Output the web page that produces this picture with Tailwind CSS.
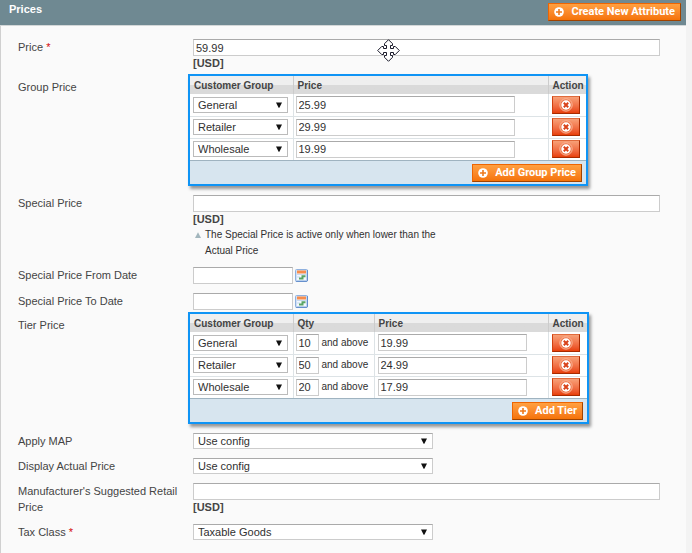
<!DOCTYPE html>
<html lang="en">
<head>
<meta charset="utf-8">
<meta name="viewport" content="width=device-width, initial-scale=1">
<title>Prices</title>
<script src="https://cdn.jsdelivr.net/npm/@tailwindcss/browser@4"></script>
</head>
<body class="min-h-screen bg-[#f3f3f3] pr-1.5 font-['Liberation_Sans',Arial,sans-serif] text-[11px] leading-4 text-[#444]">

<svg class="hidden" aria-hidden="true">
  <symbol id="plus" viewBox="0 0 10 10">
    <circle cx="5" cy="5" r="4.8" fill="#fff"/>
    <path d="M5 2v6M2 5h6" stroke="#ee7a1c" stroke-width="1.6"/>
  </symbol>
  <symbol id="remove" viewBox="0 0 14 14">
    <circle cx="7" cy="7" r="6.2" fill="#ee7448" stroke="#fbc3a8" stroke-width=".8"/>
    <circle cx="7" cy="7" r="4.7" fill="#fff"/>
    <path d="M4.8 4.8l4.4 4.4M9.2 4.8l-4.4 4.4" stroke="#d8421a" stroke-width="2"/>
  </symbol>
  <symbol id="arrow" viewBox="0 0 6 6">
    <path d="M0 .5h6L3.4 5.8h-.8z" fill="#111"/>
  </symbol>
  <symbol id="calendar" viewBox="0 0 13 13">
    <rect x=".5" y=".5" width="12" height="12" rx="1" fill="#cfe0f5" stroke="#8fb0de"/>
    <rect x="2" y="2" width="9" height="9" fill="#f4f8fc"/>
    <rect x="2" y="1.500" width="9" height="3" fill="#f78d4d"/>
    <path d="M2 5.500h9M2 8h3" stroke="#b5cbe8" stroke-width=".7"/>
    <path d="M6.500 6.200h4v2h-2v2.200H4V8.600h2.500z" fill="#5aa565"/>
    <path d="M1 12.300h11M12.400 1v11" stroke="#4f7fc4" stroke-width=".8"/>
  </symbol>
</svg>

<main class="relative min-h-screen border-l border-[#d0d0d0] bg-[#fafafa] pb-3">
  <header class="-ml-px flex h-[26px] items-start justify-between border-b border-[#d3d7d8] bg-[#6f8992] pr-[5px] pl-[9px]">
    <h1 class="pt-px font-bold text-white">Prices</h1>
    <button type="button" class="mt-[3px] flex h-[18px] items-center gap-[7px] border border-t-[#ed6502] border-r-[#a04300] border-b-[#a04300] border-l-[#ed6502] bg-linear-to-b from-[#ffa040] to-[#f57305] px-[5px] font-['Roboto',Arial,sans-serif] font-bold text-white"><svg class="size-2.5"><use href="#plus"/></svg>Create New Attribute</button>
  </header>

  <form class="pr-[26px] pl-[17px]">
    <div class="mt-[13px] flex">
      <label for="price" class="w-[175px] shrink-0">Price <span class="text-[#d40707]">*</span></label>
      <div class="flex-1">
        <input id="price" value="59.99" class="block h-[17px] w-full border border-[#ccc] border-t-[#aaa] bg-white px-0.5 text-[#303030]">
        <strong class="block leading-[15px]">[USD]</strong>
      </div>
    </div>

    <div class="mt-[3px] flex">
      <span id="group-label" class="w-[175px] shrink-0 pt-[5px]">Group Price</span>
      <div class="-ml-[5px] w-[400px] border-2 border-[#0f94f5] bg-[#d7e5ef] shadow-[2px_3px_3px_#0006]">
        <table aria-labelledby="group-label" class="w-full table-fixed border-collapse bg-white">
          <thead class="bg-linear-to-b from-[#efefef] from-50% to-[#dadada] to-50% text-left text-[10px]">
            <tr class="h-[18px]">
              <th class="w-[103px] border-r border-[#ccc] pt-0.5 pl-1">Customer Group</th>
              <th class="border-r border-[#ccc] pt-0.5 pl-1">Price</th>
              <th class="w-[38px] pt-0.5 pl-1">Action</th>
            </tr>
          </thead>
          <tbody class="text-[#303030]">
            <tr class="h-[22px] border-b border-[#dde3e6]">
              <td class="border-r border-[#dde3e6] pl-[3px]"><div class="relative w-[95px]"><select aria-label="Customer group" class="block h-4 w-full appearance-none border border-[#bbb] bg-white pl-1 leading-[14px]"><option>General</option></select><svg class="pointer-events-none absolute top-[5px] right-[6px] size-1.5"><use href="#arrow"/></svg></div></td>
              <td class="border-r border-[#dde3e6] pl-0.5"><input aria-label="Price" value="25.99" class="block h-[17px] w-[219px] border border-[#ccc] border-t-[#aaa] px-0.5"></td>
              <td class="pl-[3px]"><button type="button" aria-label="Delete" class="flex h-[18px] w-7 items-center justify-center border border-t-[#e06a3c] border-r-[#a82a00] border-b-[#a82a00] border-l-[#d2400f] bg-linear-to-b from-[#f7a077] to-[#e83f05]"><svg class="size-3.5"><use href="#remove"/></svg></button></td>
            </tr>
            <tr class="h-[22px] border-b border-[#dde3e6]">
              <td class="border-r border-[#dde3e6] pl-[3px]"><div class="relative w-[95px]"><select aria-label="Customer group" class="block h-4 w-full appearance-none border border-[#bbb] bg-white pl-1 leading-[14px]"><option>Retailer</option></select><svg class="pointer-events-none absolute top-[5px] right-[6px] size-1.5"><use href="#arrow"/></svg></div></td>
              <td class="border-r border-[#dde3e6] pl-0.5"><input aria-label="Price" value="29.99" class="block h-[17px] w-[219px] border border-[#ccc] border-t-[#aaa] px-0.5"></td>
              <td class="pl-[3px]"><button type="button" aria-label="Delete" class="flex h-[18px] w-7 items-center justify-center border border-t-[#e06a3c] border-r-[#a82a00] border-b-[#a82a00] border-l-[#d2400f] bg-linear-to-b from-[#f7a077] to-[#e83f05]"><svg class="size-3.5"><use href="#remove"/></svg></button></td>
            </tr>
            <tr class="h-[22px]">
              <td class="border-r border-[#dde3e6] pl-[3px]"><div class="relative w-[95px]"><select aria-label="Customer group" class="block h-4 w-full appearance-none border border-[#bbb] bg-white pl-1 leading-[14px]"><option>Wholesale</option></select><svg class="pointer-events-none absolute top-[5px] right-[6px] size-1.5"><use href="#arrow"/></svg></div></td>
              <td class="border-r border-[#dde3e6] pl-0.5"><input aria-label="Price" value="19.99" class="block h-[17px] w-[219px] border border-[#ccc] border-t-[#aaa] px-0.5"></td>
              <td class="pl-[3px]"><button type="button" aria-label="Delete" class="flex h-[18px] w-7 items-center justify-center border border-t-[#e06a3c] border-r-[#a82a00] border-b-[#a82a00] border-l-[#d2400f] bg-linear-to-b from-[#f7a077] to-[#e83f05]"><svg class="size-3.5"><use href="#remove"/></svg></button></td>
            </tr>
          </tbody>
        </table>
        <div class="flex h-6 items-center justify-end border-t border-[#9fb3c0] pr-1">
          <button type="button" class="flex h-[18px] items-center gap-[7px] border border-t-[#ed6502] border-r-[#a04300] border-b-[#a04300] border-l-[#ed6502] bg-linear-to-b from-[#ffa040] to-[#f57305] px-[5px] font-['Roboto',Arial,sans-serif] font-bold text-white"><svg class="size-2.5"><use href="#plus"/></svg>Add Group Price</button>
        </div>
      </div>
    </div>

    <div class="mt-[9px] flex">
      <label for="special" class="w-[175px] shrink-0">Special Price</label>
      <div class="flex-1">
        <input id="special" class="block h-[17px] w-full border border-[#ccc] border-t-[#aaa] bg-white px-0.5">
        <strong class="block leading-[15px]">[USD]</strong>
        <p class="flex w-[250px] text-[10px] text-[#303030]"><svg viewBox="0 0 6 6" class="mt-[5px] mr-[4px] ml-0.5 size-1.5 shrink-0"><path d="M3 .3L6 6H0z" fill="#a3b6bd"/></svg>The Special Price is active only when lower than the Actual Price</p>
      </div>
    </div>

    <div class="mt-2 flex">
      <label for="from" class="w-[175px] shrink-0">Special Price From Date</label>
      <input id="from" class="block h-[17px] w-[100px] border border-[#ccc] border-t-[#aaa] bg-white px-0.5">
      <button type="button" aria-label="Select from date" class="mt-0.5 ml-0.5 size-[13px]"><svg class="size-[13px]"><use href="#calendar"/></svg></button>
    </div>

    <div class="mt-[9px] flex">
      <label for="to" class="w-[175px] shrink-0">Special Price To Date</label>
      <input id="to" class="block h-[17px] w-[100px] border border-[#ccc] border-t-[#aaa] bg-white px-0.5">
      <button type="button" aria-label="Select to date" class="mt-0.5 ml-0.5 size-[13px]"><svg class="size-[13px]"><use href="#calendar"/></svg></button>
    </div>

    <div class="mt-0.5 flex">
      <span id="tier-label" class="w-[175px] shrink-0 pt-[5px]">Tier Price</span>
      <div class="-ml-[5px] w-[401px] border-2 border-[#0f94f5] bg-[#d7e5ef] shadow-[2px_3px_3px_#0006]">
        <table aria-labelledby="tier-label" class="w-full table-fixed border-collapse bg-white">
          <thead class="bg-linear-to-b from-[#efefef] from-50% to-[#dadada] to-50% text-left text-[10px]">
            <tr class="h-[18px]">
              <th class="w-[103px] border-r border-[#ccc] pt-0.5 pl-1">Customer Group</th>
              <th class="w-[81px] border-r border-[#ccc] pt-0.5 pl-1">Qty</th>
              <th class="border-r border-[#ccc] pt-0.5 pl-1">Price</th>
              <th class="w-[39px] pt-0.5 pl-1">Action</th>
            </tr>
          </thead>
          <tbody class="text-[#303030]">
            <tr class="h-[22px] border-b border-[#dde3e6]">
              <td class="border-r border-[#dde3e6] pl-[3px]"><div class="relative w-[95px]"><select aria-label="Customer group" class="block h-4 w-full appearance-none border border-[#bbb] bg-white pl-1 leading-[14px]"><option>General</option></select><svg class="pointer-events-none absolute top-[5px] right-[6px] size-1.5"><use href="#arrow"/></svg></div></td>
              <td class="border-r border-[#dde3e6] pl-0.5"><label class="flex items-center gap-[3px] text-[10px]"><input value="10" class="h-[17px] w-[23px] border border-[#ccc] border-t-[#aaa] px-0.5 text-[11px]">and above</label></td>
              <td class="border-r border-[#dde3e6] pl-[3px]"><input aria-label="Price" value="19.99" class="block h-[17px] w-[149px] border border-[#ccc] border-t-[#aaa] px-0.5"></td>
              <td class="pl-[3px]"><button type="button" aria-label="Delete" class="flex h-[18px] w-7 items-center justify-center border border-t-[#e06a3c] border-r-[#a82a00] border-b-[#a82a00] border-l-[#d2400f] bg-linear-to-b from-[#f7a077] to-[#e83f05]"><svg class="size-3.5"><use href="#remove"/></svg></button></td>
            </tr>
            <tr class="h-[22px] border-b border-[#dde3e6]">
              <td class="border-r border-[#dde3e6] pl-[3px]"><div class="relative w-[95px]"><select aria-label="Customer group" class="block h-4 w-full appearance-none border border-[#bbb] bg-white pl-1 leading-[14px]"><option>Retailer</option></select><svg class="pointer-events-none absolute top-[5px] right-[6px] size-1.5"><use href="#arrow"/></svg></div></td>
              <td class="border-r border-[#dde3e6] pl-0.5"><label class="flex items-center gap-[3px] text-[10px]"><input value="50" class="h-[17px] w-[23px] border border-[#ccc] border-t-[#aaa] px-0.5 text-[11px]">and above</label></td>
              <td class="border-r border-[#dde3e6] pl-[3px]"><input aria-label="Price" value="24.99" class="block h-[17px] w-[149px] border border-[#ccc] border-t-[#aaa] px-0.5"></td>
              <td class="pl-[3px]"><button type="button" aria-label="Delete" class="flex h-[18px] w-7 items-center justify-center border border-t-[#e06a3c] border-r-[#a82a00] border-b-[#a82a00] border-l-[#d2400f] bg-linear-to-b from-[#f7a077] to-[#e83f05]"><svg class="size-3.5"><use href="#remove"/></svg></button></td>
            </tr>
            <tr class="h-[22px]">
              <td class="border-r border-[#dde3e6] pl-[3px]"><div class="relative w-[95px]"><select aria-label="Customer group" class="block h-4 w-full appearance-none border border-[#bbb] bg-white pl-1 leading-[14px]"><option>Wholesale</option></select><svg class="pointer-events-none absolute top-[5px] right-[6px] size-1.5"><use href="#arrow"/></svg></div></td>
              <td class="border-r border-[#dde3e6] pl-0.5"><label class="flex items-center gap-[3px] text-[10px]"><input value="20" class="h-[17px] w-[23px] border border-[#ccc] border-t-[#aaa] px-0.5 text-[11px]">and above</label></td>
              <td class="border-r border-[#dde3e6] pl-[3px]"><input aria-label="Price" value="17.99" class="block h-[17px] w-[149px] border border-[#ccc] border-t-[#aaa] px-0.5"></td>
              <td class="pl-[3px]"><button type="button" aria-label="Delete" class="flex h-[18px] w-7 items-center justify-center border border-t-[#e06a3c] border-r-[#a82a00] border-b-[#a82a00] border-l-[#d2400f] bg-linear-to-b from-[#f7a077] to-[#e83f05]"><svg class="size-3.5"><use href="#remove"/></svg></button></td>
            </tr>
          </tbody>
        </table>
        <div class="flex h-6 items-center justify-end border-t border-[#9fb3c0] pr-1">
          <button type="button" class="flex h-[18px] items-center gap-[7px] border border-t-[#ed6502] border-r-[#a04300] border-b-[#a04300] border-l-[#ed6502] bg-linear-to-b from-[#ffa040] to-[#f57305] px-[5px] font-['Roboto',Arial,sans-serif] font-bold text-white"><svg class="size-2.5"><use href="#plus"/></svg>Add Tier</button>
        </div>
      </div>
    </div>

    <div class="mt-[9px] flex">
      <label for="map" class="w-[175px] shrink-0">Apply MAP</label>
      <div class="relative w-[240px]"><select id="map" class="block h-4 w-full appearance-none border border-[#ccc] border-t-[#aaa] bg-white pl-1 leading-[14px] text-[#303030]"><option>Use config</option></select><svg class="pointer-events-none absolute top-[5px] right-[6px] size-1.5"><use href="#arrow"/></svg></div>
    </div>

    <div class="mt-[9px] flex">
      <label for="display" class="w-[175px] shrink-0">Display Actual Price</label>
      <div class="relative w-[240px]"><select id="display" class="block h-4 w-full appearance-none border border-[#ccc] border-t-[#aaa] bg-white pl-1 leading-[14px] text-[#303030]"><option>Use config</option></select><svg class="pointer-events-none absolute top-[5px] right-[6px] size-1.5"><use href="#arrow"/></svg></div>
    </div>

    <div class="mt-[9px] flex">
      <label for="msrp" class="w-[175px] shrink-0 pr-1">Manufacturer's Suggested Retail Price</label>
      <div class="flex-1">
        <input id="msrp" class="block h-[17px] w-full border border-[#ccc] border-t-[#aaa] bg-white px-0.5">
        <strong class="block leading-[15px]">[USD]</strong>
      </div>
    </div>

    <div class="mt-[9px] flex">
      <label for="tax" class="w-[175px] shrink-0">Tax Class <span class="text-[#d40707]">*</span></label>
      <div class="relative w-[240px]"><select id="tax" class="block h-4 w-full appearance-none border border-[#ccc] border-t-[#aaa] bg-white pl-1 leading-[14px] text-[#303030]"><option>Taxable Goods</option></select><svg class="pointer-events-none absolute top-[5px] right-[6px] size-1.5"><use href="#arrow"/></svg></div>
    </div>
  </form>

  <!-- Move pointer -->
  <svg class="pointer-events-none absolute top-[39px] left-[376px] size-[23px]" viewBox="0 0 23 23" aria-hidden="true">
    <path d="M11.500 .7L15.500 4.700V6.500h-2v3h3v-2h1.800l4 4-4 4h-1.800v-2h-3v3h2v1.800l-4 4-4-4v-1.800h2v-3h-3v2H4.700l-4-4 4-4h1.800v2h3v-3h-2V4.700z" fill="#fff" stroke="#1a1a2a"/>
  </svg>
</main>
</body>
</html>
